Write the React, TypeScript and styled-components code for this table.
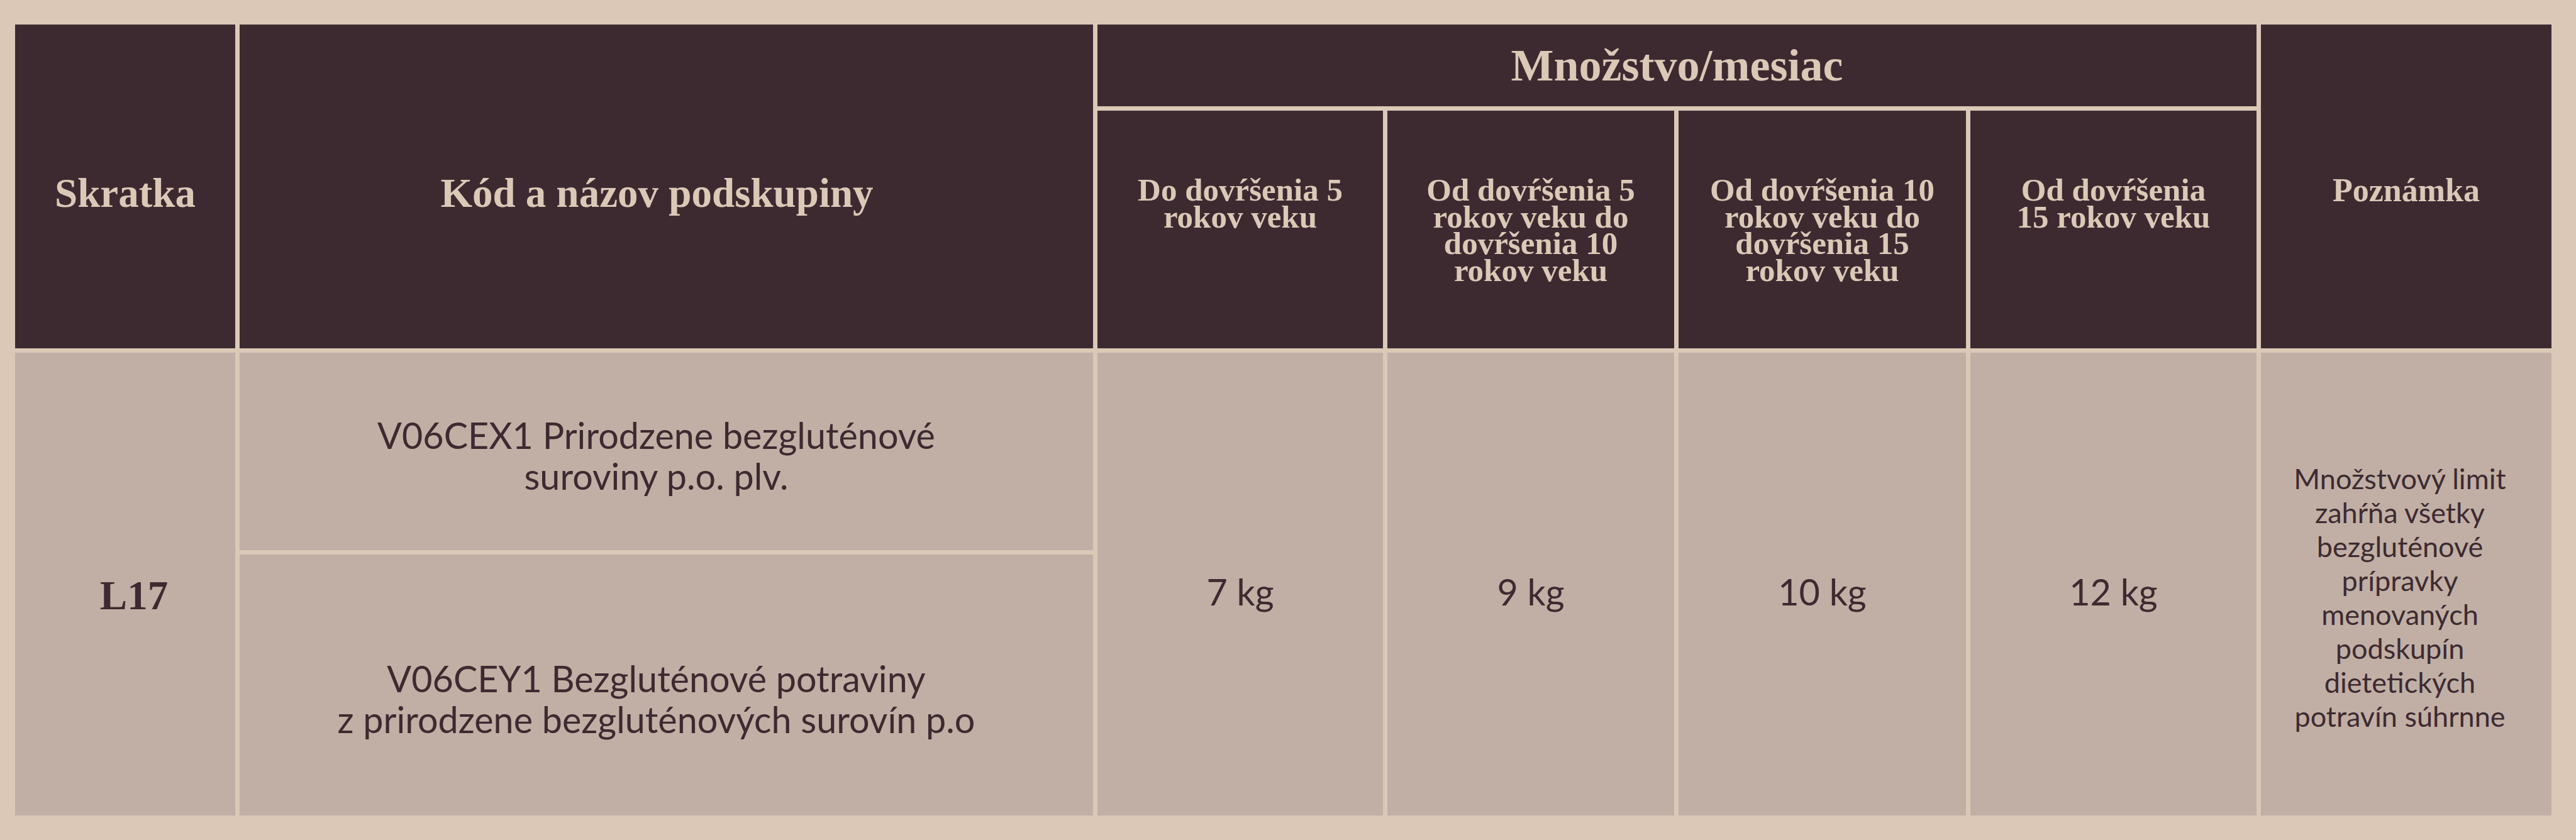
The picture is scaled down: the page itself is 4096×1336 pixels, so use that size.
import React from "react";
import styled, { createGlobalStyle } from "styled-components";

const GlobalStyle = createGlobalStyle`
  html, body {
    margin: 0;
    padding: 0;
    background: #dbc8b6;
  }
  body {
    width: 4096px;
    height: 1336px;
    overflow: hidden;
  }
`;

const Page = styled.div`
  box-sizing: border-box;
  width: 4096px;
  height: 1336px;
  padding: 39px 39px 0 24px;
  background: #dbc8b6;
`;

const Table = styled.div`
  display: grid;
  grid-template-columns: 350px 1357px 454px 456px 457px 455px 462px;
  grid-template-rows: 130px 378px 314px 415px;
  gap: 7px;
`;

interface CellProps {
  $col: string;
  $row: string;
  $shift?: number;
  $padRight?: number;
  $padLeft?: number;
  $top?: boolean;
}

const HeadCell = styled.div<CellProps>`
  grid-column: ${(p) => p.$col};
  grid-row: ${(p) => p.$row};
  box-sizing: border-box;
  display: flex;
  align-items: ${(p) => (p.$top ? "flex-start" : "center")};
  justify-content: center;
  padding-top: ${(p) => p.$shift ?? 0}px;
  padding-right: ${(p) => p.$padRight ?? 0}px;
  padding-left: ${(p) => p.$padLeft ?? 0}px;
  background: #3d2a31;
  color: #dbc8b6;
  font-family: "Liberation Serif", "Times New Roman", serif;
  font-weight: 700;
  text-align: center;
`;

const BodyCell = styled(HeadCell)`
  background: #c1afa5;
  color: #3d2a31;
  font-family: "Lato", "Liberation Sans", sans-serif;
  font-weight: 400;
`;

const HeadTitle = styled.span<{ $size: number }>`
  font-size: ${(p) => p.$size}px;
  line-height: 1;
  white-space: nowrap;
`;

const AgeLabel = styled.span`
  font-size: 51px;
  line-height: 42.5px;
  white-space: nowrap;
`;

const GroupCode = styled.span`
  font-family: "Liberation Serif", "Times New Roman", serif;
  font-weight: 700;
  font-size: 65px;
  line-height: 1;
`;

const SubgroupName = styled.span`
  font-size: 57.5px;
  line-height: 65px;
  white-space: nowrap;
`;

const Amount = styled.span`
  font-size: 57.5px;
  line-height: 1;
  white-space: nowrap;
`;

const NoteText = styled.span`
  font-size: 45px;
  line-height: 54px;
  white-space: nowrap;
`;

const ageColumns = [
  { col: "3", lines: ["Do dovŕšenia 5", "rokov veku"], amount: "7 kg" },
  {
    col: "4",
    lines: ["Od dovŕšenia 5", "rokov veku do", "dovŕšenia 10", "rokov veku"],
    amount: "9 kg",
  },
  {
    col: "5",
    lines: ["Od dovŕšenia 10", "rokov veku do", "dovŕšenia 15", "rokov veku"],
    amount: "10 kg",
  },
  { col: "6", lines: ["Od dovŕšenia", "15 rokov veku"], amount: "12 kg" },
];

const noteLines = [
  "Množstvový limit",
  "zahŕňa všetky",
  "bezgluténové",
  "prípravky",
  "menovaných",
  "podskupín",
  "dietetických",
  "potravín súhrnne",
];

function Lines({ lines }: { lines: string[] }) {
  return (
    <>
      {lines.map((line, i) => (
        <React.Fragment key={i}>
          {i > 0 && <br />}
          {line}
        </React.Fragment>
      ))}
    </>
  );
}

export default function App() {
  return (
    <Page>
      <GlobalStyle />
      <Table>
        <HeadCell $col="1" $row="1 / span 2" $shift={21}>
          <HeadTitle $size={65}>Skratka</HeadTitle>
        </HeadCell>
        <HeadCell $col="2" $row="1 / span 2" $shift={22} $padRight={30}>
          <HeadTitle $size={65}>Kód a názov podskupiny</HeadTitle>
        </HeadCell>
        <HeadCell $col="3 / span 4" $row="1">
          <HeadTitle $size={72}>Množstvo/mesiac</HeadTitle>
        </HeadCell>
        {ageColumns.map((c) => (
          <HeadCell key={c.col} $col={c.col} $row="2" $top $shift={105}>
            <AgeLabel>
              <Lines lines={c.lines} />
            </AgeLabel>
          </HeadCell>
        ))}
        <HeadCell $col="7" $row="1 / span 2" $shift={12}>
          <HeadTitle $size={52}>Poznámka</HeadTitle>
        </HeadCell>

        <BodyCell $col="1" $row="3 / span 2" $shift={37} $padLeft={28}>
          <GroupCode>L17</GroupCode>
        </BodyCell>
        <BodyCell $col="2" $row="3" $shift={12} $padRight={32}>
          <SubgroupName>
            <Lines
              lines={["V06CEX1 Prirodzene bezgluténové", "suroviny p.o. plv."]}
            />
          </SubgroupName>
        </BodyCell>
        <BodyCell $col="2" $row="4" $shift={43} $padRight={32}>
          <SubgroupName>
            <Lines
              lines={[
                "V06CEY1 Bezgluténové potraviny",
                "z prirodzene bezgluténových surovín p.o",
              ]}
            />
          </SubgroupName>
        </BodyCell>
        {ageColumns.map((c) => (
          <BodyCell key={c.col} $col={c.col} $row="3 / span 2" $shift={24}>
            <Amount>{c.amount}</Amount>
          </BodyCell>
        ))}
        <BodyCell $col="7" $row="3 / span 2" $shift={42} $padRight={20}>
          <NoteText>
            <Lines lines={noteLines} />
          </NoteText>
        </BodyCell>
      </Table>
    </Page>
  );
}
